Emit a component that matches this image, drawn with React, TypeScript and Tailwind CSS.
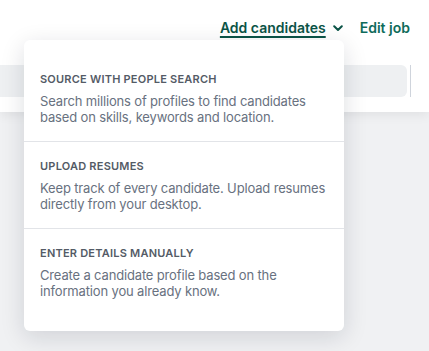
import React from 'react';

const options = [
  {
    title: 'Source with People Search',
    text: 'Search millions of profiles to find candidates based on skills, keywords and location.',
  },
  {
    title: 'Upload resumes',
    text: 'Keep track of every candidate. Upload resumes directly from your desktop.',
  },
  {
    title: 'Enter details manually',
    text: 'Create a candidate profile based on the information you already know.',
  },
];

const ChevronDown = () => (
  <svg width="10" height="7" viewBox="0 0 10 7" fill="none" className="ml-[7px] mt-[2px]">
    <path d="M1.2 1.3L5 5L8.8 1.3" stroke="currentColor" strokeWidth="2" strokeLinecap="round" strokeLinejoin="round" />
  </svg>
);

export default function App() {
  return (
    <div className="relative w-[429px] h-[351px] overflow-hidden bg-[#f0f1f3] font-['Inter',sans-serif]">
      <header className="h-[112px] bg-white shadow-[0_4px_10px_rgba(0,0,0,0.06)]">
        <div className="flex h-[55px] items-center justify-end gap-[17px] pr-[19px] text-[14px] font-semibold leading-5">
          <button className="flex items-center text-[#0b5447]">
            <span className="underline underline-offset-[3px] decoration-[1.5px]">Add candidates</span>
            <ChevronDown />
          </button>
          <button className="text-[#0f6b5b]">Edit job</button>
        </div>
        <div className="mt-[10px] flex items-center">
          <div className="ml-[-10px] h-8 w-[417px] rounded-md bg-[#eef0f2]" />
          <div className="ml-[3px] h-8 w-px bg-[#cfd4dc]" />
        </div>
      </header>

      <div className="absolute left-6 top-10 w-[320px] rounded-md bg-white py-[15px] shadow-[0_6px_24px_rgba(15,23,42,0.14)]">
        {options.map((o, i) => (
          <div
            key={o.title}
            className={`px-4 py-4 ${i > 0 ? 'border-t border-[#e2e4e8]' : ''}`}
          >
            <div className="text-[11px] font-semibold uppercase leading-4 tracking-[0.02em] text-[#545b66]">
              {o.title}
            </div>
            <p className="mt-[7px] text-[13px] leading-[15.6px] tracking-[-0.012em] text-[#687180]">{o.text}</p>
          </div>
        ))}
      </div>
    </div>
  );
}
